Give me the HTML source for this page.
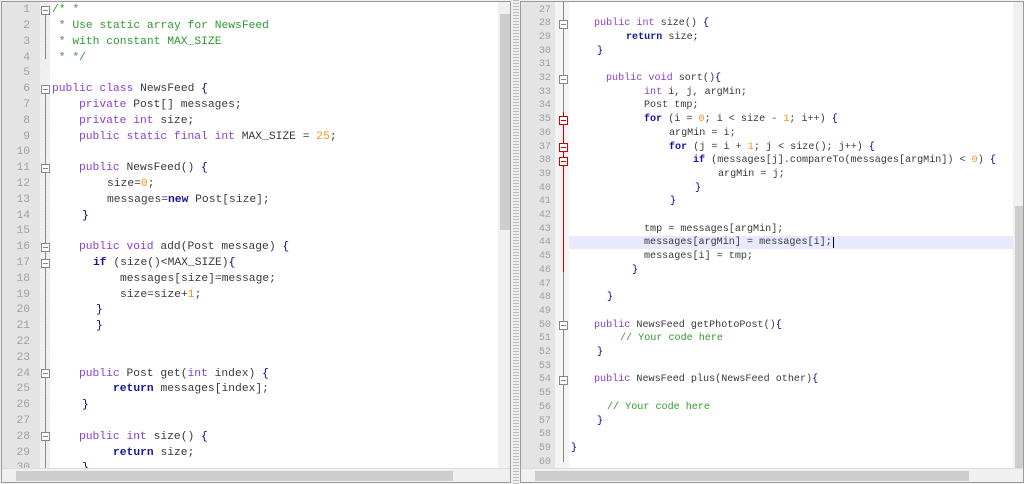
<!DOCTYPE html>
<html><head><meta charset="utf-8"><style>
*{margin:0;padding:0;box-sizing:border-box}
body{width:1024px;height:484px;background:#f0f0f0;position:relative;overflow:hidden;font-family:"Liberation Mono",monospace}
.pane{position:absolute;background:#fff;overflow:hidden}
.gut{position:absolute;background:#e4e4e4}
.l{position:absolute;white-space:pre;color:#3a3a3a}
.n{position:absolute;white-space:pre;color:#a0a0a0;text-align:right}
.k{color:#8a3fd0}.b{color:#1414a8;font-weight:bold}.o{color:#ff9020}.c{color:#2f9a2f}.p{color:#000080}
.L .l,.L .n{font-size:11.3px;line-height:15.8px;height:15.8px}
.R .l,.R .n{font-size:10.1px;line-height:13.7px;height:13.7px}
.sb{position:absolute;background:#f0f0f0}
.th{position:absolute;background:#cdcdcd}
.fb{position:absolute;width:9px;height:9px;border:1px solid #888;background:#fff}
.fb:after{content:"";position:absolute;left:1px;top:3px;width:5px;height:1px;background:#888}
.fr{border-color:#c00}.fr:after{background:#c00}
</style></head><body>
<div class="pane L" style="left:1px;top:1px;width:510px;height:482px;border:1px solid #9a9a9a">
<div class="gut" style="left:0;top:0;width:38px;height:482px"></div>
<div style="position:absolute;left:38px;top:0;width:10px;height:482px;background:repeating-linear-gradient(45deg,#f6f6f6 0 1px,#e9e9e9 1px 2px)"></div>
<div style="position:absolute;left:43px;top:12px;width:1px;height:45px;background:#888"></div>
<div style="position:absolute;left:43px;top:92px;width:1px;height:380px;background:#888"></div>
<div class="fb" style="left:39px;top:4px"></div>
<div class="fb" style="left:39px;top:83px"></div>
<div class="fb" style="left:39px;top:162px"></div>
<div class="fb" style="left:39px;top:241px"></div>
<div class="fb" style="left:39px;top:257px"></div>
<div class="fb" style="left:39px;top:367px"></div>
<div class="fb" style="left:39px;top:430px"></div>
<div id="ln"></div>
<div class="sb" style="left:496px;top:0;width:14px;height:482px"></div>
<div class="th" style="left:498px;top:12px;width:11px;height:216px"></div>
<div class="sb" style="left:0;top:466px;width:510px;height:16px;border-top:1px solid #ddd"></div>
<div class="th" style="left:14px;top:469px;width:437px;height:10px"></div>
</div>
<div style="position:absolute;left:513px;top:0;width:6px;height:484px;background:repeating-linear-gradient(#bbb 0 1px,#eee 1px 3px)"></div>
<div class="pane R" style="left:520px;top:1px;width:504px;height:482px;border:1px solid #9a9a9a">
<div class="gut" style="left:0;top:0;width:34px;height:482px"></div>
<div style="position:absolute;left:34px;top:0;width:14px;height:482px;background:#f4f4f4"></div>
<div style="position:absolute;left:42px;top:0;width:1px;height:110px;background:#888"></div>
<div style="position:absolute;left:42px;top:110px;width:1px;height:160px;background:#c00"></div>
<div style="position:absolute;left:42px;top:270px;width:1px;height:190px;background:#888"></div>
<div class="fb" style="left:38px;top:18px"></div>
<div class="fb" style="left:38px;top:73px"></div>
<div class="fb fr" style="left:38px;top:114px"></div>
<div class="fb fr" style="left:38px;top:141px"></div>
<div class="fb fr" style="left:38px;top:155px"></div>
<div class="fb" style="left:38px;top:319px"></div>
<div class="fb" style="left:38px;top:374px"></div>
<div style="position:absolute;left:48px;top:234px;width:444px;height:13px;background:#e8e8ff"></div>
<div id="rn"></div>
<div class="sb" style="left:492px;top:0;width:12px;height:482px"></div>
<div class="th" style="left:494px;top:204px;width:10px;height:262px"></div>
<div class="sb" style="left:0;top:466px;width:504px;height:16px;border-top:1px solid #ddd"></div>
<div class="th" style="left:14px;top:469px;width:434px;height:10px"></div>
</div>
<script>
function add(id,lines,top0,lh,nw,first){
 var h='';
 for(var i=0;i<lines.length;i++){
  var t=top0+i*lh;
  h+='<div class="n" style="left:0;width:'+nw+'px;top:'+t+'px">'+(first+i)+'</div>';
  if(lines[i])h+='<div class="l" style="left:'+lines[i][0]+'px;top:'+t+'px">'+lines[i][1]+'</div>';
 }
 document.getElementById(id).innerHTML=h;
}
var L=[
[50,'<span class="c">/* *</span>'],
[50,'<span class="c"> * Use static array for NewsFeed</span>'],
[50,'<span class="c"> * with constant MAX_SIZE</span>'],
[50,'<span class="c"> * */</span>'],
null,
[50,'<span class="k">public class</span> NewsFeed <span class="p">{</span>'],
[77,'<span class="k">private</span> Post[] messages;'],
[77,'<span class="k">private int</span> size;'],
[77,'<span class="k">public static final int</span> MAX_SIZE = <span class="o">25</span>;'],
null,
[77,'<span class="k">public</span> NewsFeed() <span class="p">{</span>'],
[105,'size=<span class="o">0</span>;'],
[105,'messages=<span class="b">new</span> Post[size];'],
[80,'<span class="p">}</span>'],
null,
[77,'<span class="k">public void</span> add(Post message) <span class="p">{</span>'],
[91,'<span class="b">if</span> (size()&lt;MAX_SIZE)<span class="p">{</span>'],
[118,'messages[size]=message;'],
[118,'size=size+<span class="o">1</span>;'],
[94,'<span class="p">}</span>'],
[94,'<span class="p">}</span>'],
null,null,
[77,'<span class="k">public</span> Post get(<span class="k">int</span> index) <span class="p">{</span>'],
[111,'<span class="b">return</span> messages[index];'],
[80,'<span class="p">}</span>'],
null,
[77,'<span class="k">public int</span> size() <span class="p">{</span>'],
[111,'<span class="b">return</span> size;'],
[80,'<span class="p">}</span>']
];
add('ln',L,1.1,15.8,28,1);
var R=[
null,
[73,'<span class="k">public int</span> size() <span class="p">{</span>'],
[105,'<span class="b">return</span> size;'],
[76,'<span class="p">}</span>'],
null,
[85,'<span class="k">public void</span> sort()<span class="p">{</span>'],
[123,'<span class="k">int</span> i, j, argMin;'],
[123,'Post tmp;'],
[123,'<span class="b">for</span> (i = <span class="o">0</span>; i &lt; size - <span class="o">1</span>; i++) <span class="p">{</span>'],
[148,'argMin = i;'],
[148,'<span class="b">for</span> (j = i + <span class="o">1</span>; j &lt; size(); j++) <span class="p">{</span>'],
[172,'<span class="b">if</span> (messages[j].compareTo(messages[argMin]) &lt; <span class="o">0</span>) <span class="p">{</span>'],
[197,'argMin = j;'],
[174,'<span class="p">}</span>'],
[149,'<span class="p">}</span>'],
null,
[123,'tmp = messages[argMin];'],
[123,'messages[argMin] = messages[i];<span style="border-left:1px solid #000;margin-left:1px"></span>'],
[123,'messages[i] = tmp;'],
[111,'<span class="p">}</span>'],
null,
[86,'<span class="p">}</span>'],
null,
[73,'<span class="k">public</span> NewsFeed getPhotoPost()<span class="p">{</span>'],
[99,'<span class="c">// Your code here</span>'],
[76,'<span class="p">}</span>'],
null,
[73,'<span class="k">public</span> NewsFeed plus(NewsFeed other)<span class="p">{</span>'],
null,
[86,'<span class="c">// Your code here</span>'],
[76,'<span class="p">}</span>'],
null,
[50,'<span class="p">}</span>'],
null
];
add('rn',R,1.5,13.7,30,27);
</script>
</body></html>
